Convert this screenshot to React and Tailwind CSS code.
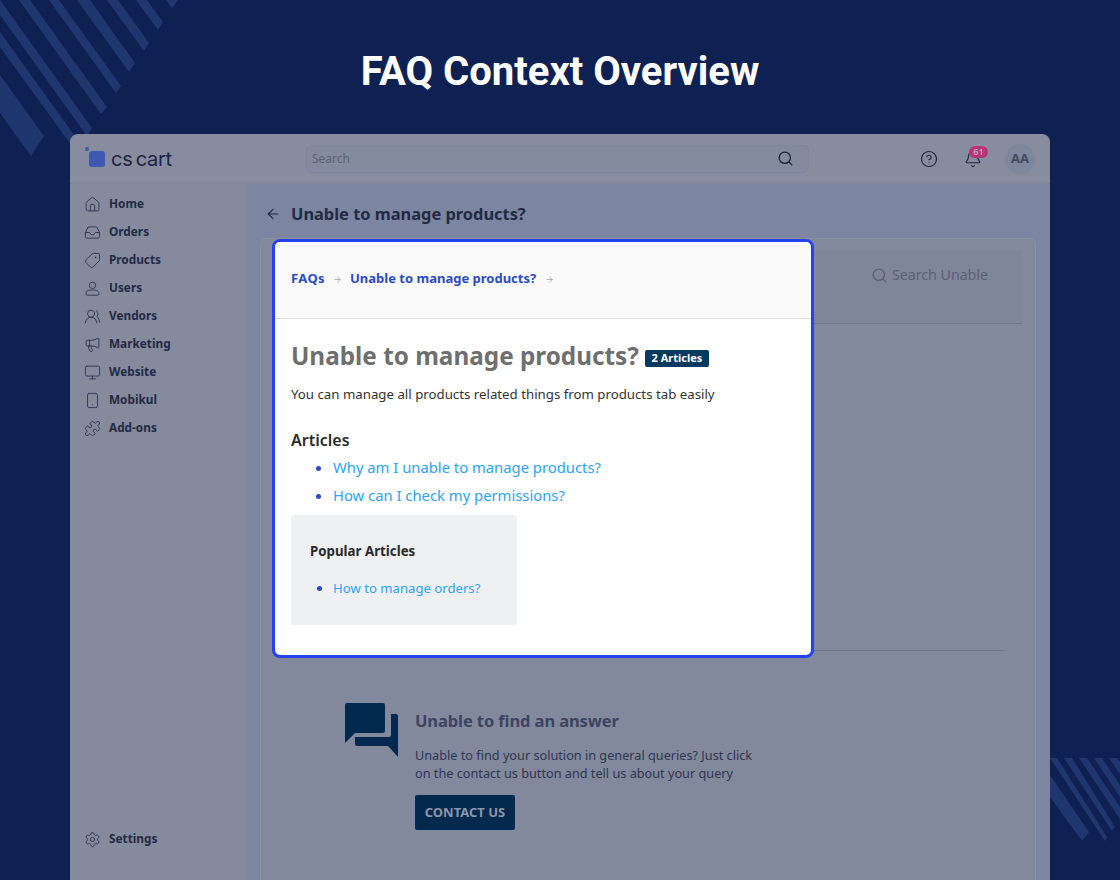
import {
  ArrowLeft,
  ArrowRight,
  Bell,
  CircleHelp,
  House,
  Inbox,
  Megaphone,
  Monitor,
  Puzzle,
  Search,
  Settings,
  Smartphone,
  Tag,
  UsersRound,
} from "lucide-react";

const font = "font-['Noto_Sans',sans-serif]";

function FlippedTag(props) {
  return <Tag {...props} className={`${props.className} -scale-x-100`} />;
}

// head over a closed, rounded body
function UserClosed({ size, strokeWidth, className }) {
  return (
    <svg
      width={size}
      height={size}
      viewBox="0 0 24 24"
      fill="none"
      stroke="currentColor"
      strokeWidth={strokeWidth}
      className={className}
    >
      <circle cx="12" cy="7.5" r="4.5" />
      <path d="M3 18.5C3 15.5 6 14 12 14s9 1.500 9 4.500V20a1.500 1.500 0 0 1-1.500 1.500h-15A1.500 1.500 0 0 1 3 20z" />
    </svg>
  );
}

const navItems = [
  { label: "Home", icon: House },
  { label: "Orders", icon: Inbox },
  { label: "Products", icon: FlippedTag },
  { label: "Users", icon: UserClosed },
  { label: "Vendors", icon: UsersRound },
  { label: "Marketing", icon: Megaphone },
  { label: "Website", icon: Monitor },
  { label: "Mobikul", icon: Smartphone },
  { label: "Add-ons", icon: Puzzle },
];

const topStripes = [
  "166,0 178,0 172,8",
  "136,0 147,0 163,22 158,30",
  "107,0 118,0 149,43 144,51",
  "77,0 90,0 135,63 129,72",
  "49,0 59,0 121,86 116,93",
  "19,0 30,0 107,107 101,114",
  "0,15 0,0 92,128 87,136",
  "0,47 0,32 100,171 90,171",
  "0,113 0,75 44,136 31,156",
];

const bottomStripes = [
  "1050,758 1057,758 1107,837 1105,841",
  "1064,758 1072,758 1115,827 1112,831",
  "1079,758 1087,758 1120,807 1120,819",
  "1094,758 1102,758 1120,785 1120,797",
  "1109,758 1117,758 1120,762 1120,774",
  "1050,775 1089,832 1082,841 1050,797",
];

function Decor() {
  return (
    <svg
      className="absolute left-0 top-0"
      width="1120"
      height="880"
      viewBox="0 0 1120 880"
    >
      {topStripes.concat(bottomStripes).map((points) => (
        <polygon key={points} points={points} fill="#20366f" />
      ))}
    </svg>
  );
}

function Header() {
  return (
    <div className="flex h-[50px] shrink-0 items-center border-b border-[#7c8499] bg-[#878d9f] pl-[15px] pr-[14px]">
      <div className="relative ml-[4px] h-4 w-4 rounded-[3px] bg-[#3d5ab0]">
        <span className="absolute -left-[4px] -top-[4px] h-1 w-1 rounded-full bg-[#3d5ab0]" />
      </div>
      <span className="ml-[6px] w-[195px] font-['Inter',sans-serif] text-[20px] font-normal tracking-[-0.3px] text-[#1c2542] [word-spacing:-2px]">
        cs cart
      </span>
      <div className="flex h-[28px] w-[503px] items-center justify-between rounded-md border border-[#7d869f] bg-[#858b9e] pl-[5px] pr-[14px]">
        <span className="text-xs text-[#5a6177]">Search</span>
        <Search size={17} strokeWidth={1.8} className="text-[#1a2138]" />
      </div>
      <CircleHelp size={18} strokeWidth={1.6} className="ml-[111px] text-[#1f2640]" />
      <div className="relative ml-[26px] h-[18px] w-[18px]">
        <Bell size={18} strokeWidth={1.6} className="text-[#1f2640]" />
        <span className="absolute -right-[6px] -top-[4px] flex h-3 w-[19px] items-center justify-center rounded-full bg-[#bd3373] text-[9px] font-semibold leading-none text-[#c9a9c4]">
          61
        </span>
      </div>
      <div className="ml-[23px] flex h-[30px] w-[30px] items-center justify-center rounded-full bg-[#7f879d] text-[13px] font-bold text-[#434a63]">
        AA
      </div>
    </div>
  );
}

function Sidebar() {
  return (
    <div className="flex w-[176px] shrink-0 flex-col justify-between bg-[#858b9c] pb-[27px] pl-[14px] pt-[6px]">
      <div>
        {navItems.map(({ label, icon: Icon }) => (
          <div key={label} className="flex h-[28px] items-center gap-[8px]">
            <Icon size={17} strokeWidth={1.3} className="text-[#2f3650]" />
            <span className="text-[11.8px] font-bold text-[#232a45]">{label}</span>
          </div>
        ))}
      </div>
      <div className="flex h-[28px] items-center gap-[8px]">
        <Settings size={17} strokeWidth={1.3} className="text-[#2f3650]" />
        <span className="text-[11.8px] font-bold text-[#232a45]">Settings</span>
      </div>
    </div>
  );
}

function ContactBlock() {
  return (
    <div className="mt-[52px] flex pl-[84px]">
      <svg width="53" height="54" viewBox="0 0 53 54" className="shrink-0">
        <path
          d="M2 0h36a2 2 0 0 1 2 2v26a2 2 0 0 1-2 2H10L0 40V2a2 2 0 0 1 2-2z"
          fill="#03294f"
        />
        <path
          d="M46 11h5a2 2 0 0 1 2 2v41L43 43H12a2 2 0 0 1-2-2v-7h34a2 2 0 0 0 2-2z"
          fill="#03294f"
        />
      </svg>
      <div className="ml-[17px]">
        <h3 className="mt-[6px] text-[16.5px] font-bold leading-6 tracking-[-0.1px] text-[#3d4460]">
          Unable to find an answer
        </h3>
        <p className="mt-[14px] w-[345px] text-[12.7px] leading-[17.5px] text-[#2f3650]">
          Unable to find your solution in general queries? Just click on the
          contact us button and tell us about your query
        </p>
        <div className="mt-[13px] flex h-[35px] w-[100px] items-center justify-center rounded-[2px] bg-[#03294f] text-[13px] font-bold text-[#8d96a8]">
          CONTACT US
        </div>
      </div>
    </div>
  );
}

function Modal() {
  return (
    <div className="absolute left-[202px] top-[105px] h-[419px] w-[542px] overflow-hidden rounded-lg border-[3px] border-[#2541f0] bg-white">
      <div className="flex h-[77px] items-center border-b border-[#dddddd] bg-[#fafafa] pb-[2px] pl-[16px] text-[13px] font-bold text-[#2b4bc5]">
        <span className="tracking-[0.4px]">FAQs</span>
        <ArrowRight size={9} className="ml-[8px] mr-[8px] text-[#999999]" />
        Unable to manage products?
        <ArrowRight size={9} className="mx-[9px] text-[#999999]" />
      </div>
      <div className="px-[16px] pt-[20px]">
        <div className="flex items-center">
          <h1 className="text-[24.3px] font-bold leading-[34px] text-[#6f6f6f]">
            Unable to manage products?
          </h1>
          <span className="ml-[6px] mt-[5px] flex h-[17px] w-[64px] items-center justify-center rounded-[2px] bg-[#033a5e] text-[11px] font-bold text-white">
            2 Articles
          </span>
        </div>
        <p className="mt-[11px] text-[13.25px] leading-5 text-[#333333]">
          You can manage all products related things from products tab easily
        </p>
        <h2 className="mt-[24px] text-[16px] font-semibold leading-6 text-[#2b2b2b]">
          Articles
        </h2>
        <ul className="mt-[1px] list-disc pl-[42px] text-[14.8px] leading-[28px] text-[#2ea3f7] marker:text-[#2b4bc5]">
          <li>Why am I unable to manage products?</li>
          <li>How can I check my permissions?</li>
        </ul>
        <div className="mt-[6px] h-[110px] w-[226px] rounded bg-[#eff0f2] pl-[19px] pt-[26px]">
          <h3 className="text-[13.3px] font-bold leading-5 text-[#2b2b2b]">
            Popular Articles
          </h3>
          <ul className="mt-[17px] list-disc pl-[23px] text-[13.15px] leading-5 text-[#2ea3f7] marker:text-[#2b4bc5]">
            <li>How to manage orders?</li>
          </ul>
        </div>
      </div>
    </div>
  );
}

function Main() {
  return (
    <div className="flex-1 bg-[#7c86a0] px-[14px]">
      <div className="flex h-[54px] items-center pt-[6px]">
        <ArrowLeft size={16} strokeWidth={1.6} className="ml-[5px] text-[#1f2640]" />
        <span className="ml-[10px] text-[16.4px] font-bold text-[#232a45]">
          Unable to manage products?
        </span>
      </div>
      <div className="h-[700px] rounded-t-md border border-[#8a90a2] bg-[#83899c] pt-[12px]">
        <div className="ml-[11px] mr-[13px] flex h-[73px] items-start justify-end border-b border-[#70778d] bg-[#7f8699] pr-[34px] pt-[13px]">
          <Search size={17} strokeWidth={1.8} className="mt-[3px] text-[#5a6177]" />
          <span className="ml-[4px] text-[14.2px] text-[#5a6177]">Search Unable</span>
        </div>
        <div className="ml-[14px] mr-[31px] mt-[326px] border-b border-[#70778d]" />
        <ContactBlock />
      </div>
    </div>
  );
}

export default function App() {
  return (
    <div className={`relative h-[880px] w-[1120px] overflow-hidden bg-[#0f2152] ${font}`}>
      <Decor />
      <h1 className="relative flex h-[134px] items-center justify-center pt-[9px] font-['Roboto',sans-serif] text-[40px] font-bold text-white">
        FAQ Context Overview
      </h1>
      <div className="relative mx-[70px] flex h-[746px] flex-col overflow-hidden rounded-t-lg">
        <Header />
        <div className="flex min-h-0 flex-1 overflow-hidden">
          <Sidebar />
          <Main />
        </div>
        <Modal />
      </div>
    </div>
  );
}
